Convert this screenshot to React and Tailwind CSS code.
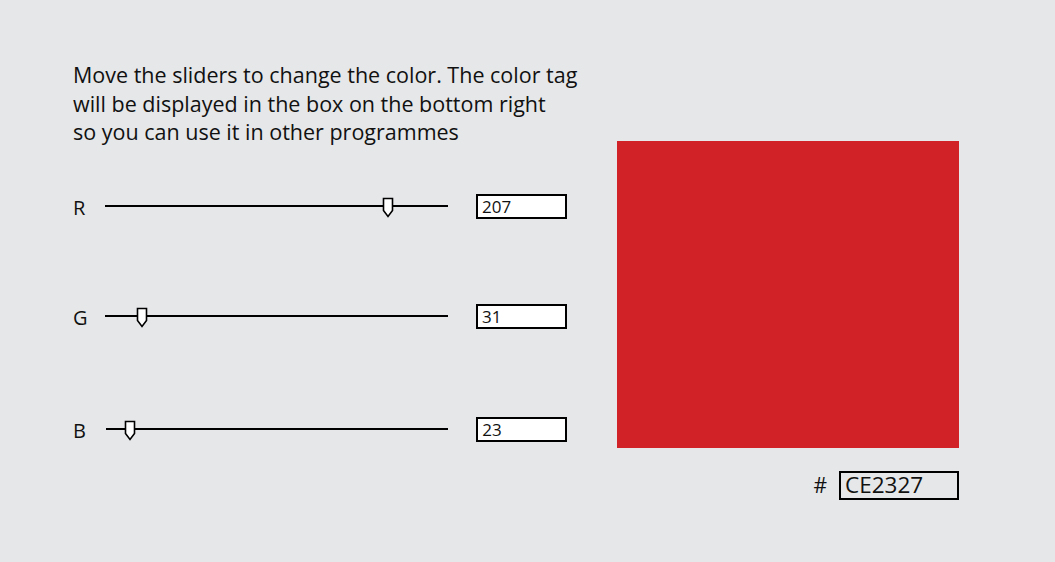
import React from "react";

const sliders = [
  { key: "R", value: 207, thumb: "left-[277px]", track: "ml-0", rowGap: "mt-[47px]" },
  { key: "G", value: 31, thumb: "left-[31px]", track: "ml-0", rowGap: "mt-[85px]" },
  { key: "B", value: 23, thumb: "left-[18px]", track: "ml-px", rowGap: "mt-[88px]" },
];

const Thumb = () => (
  <svg width="12" height="21" viewBox="0 0 12 21" className="block">
    <path d="M1.5 1.5 H10.5 V13.5 L6 19.5 L1.5 13.5 Z" fill="#fff" stroke="#000" strokeWidth="1.6" strokeLinejoin="miter" />
  </svg>
);

const SliderRow = ({ item }) => (
  <div className={`flex items-center h-[25px] ${item.rowGap}`}>
    <span className="w-[32px] text-[20px] leading-none pt-[3px]">{item.key}</span>
    <div className={`relative w-[343px] h-[20px] flex items-center ${item.track}`}>
      <div className="w-full h-[2px] bg-black" />
      <div className={`absolute top-[1px] ${item.thumb}`}>
        <Thumb />
      </div>
    </div>
    <div className="ml-[28px] w-[91px] h-[25px] border-2 border-black bg-white flex items-center px-[4px] text-[17px] leading-none">
      {item.value}
    </div>
  </div>
);

const App = () => {
  return (
    <div className="w-[1055px] h-[562px] bg-[#e6e7e8] text-[#111] font-['Open_Sans',_sans-serif] flex overflow-hidden">
      {/* left column */}
      <div className="pl-[73px] pt-[61px] w-[567px]">
        <p className="text-[21.5px] leading-[28.5px] whitespace-nowrap">
          Move the sliders to change the color. The color tag
          <br />
          will be displayed in the box on the bottom right
          <br />
          so you can use it in other programmes
        </p>
        {sliders.map((s) => (
          <SliderRow key={s.key} item={s} />
        ))}
      </div>

      {/* right column */}
      <div className="ml-[50px] pt-[141px] flex flex-col">
        <div className="w-[342px] h-[307px] bg-[#d12227]" />
        <div className="mt-[23px] flex items-center justify-end">
          <span className="text-[21px] leading-none mr-[12px]">#</span>
          <div className="w-[120px] h-[29px] border-2 border-black flex items-center px-[4px] text-[22.5px] leading-none">
            CE2327
          </div>
        </div>
      </div>
    </div>
  );
};

export default App;
